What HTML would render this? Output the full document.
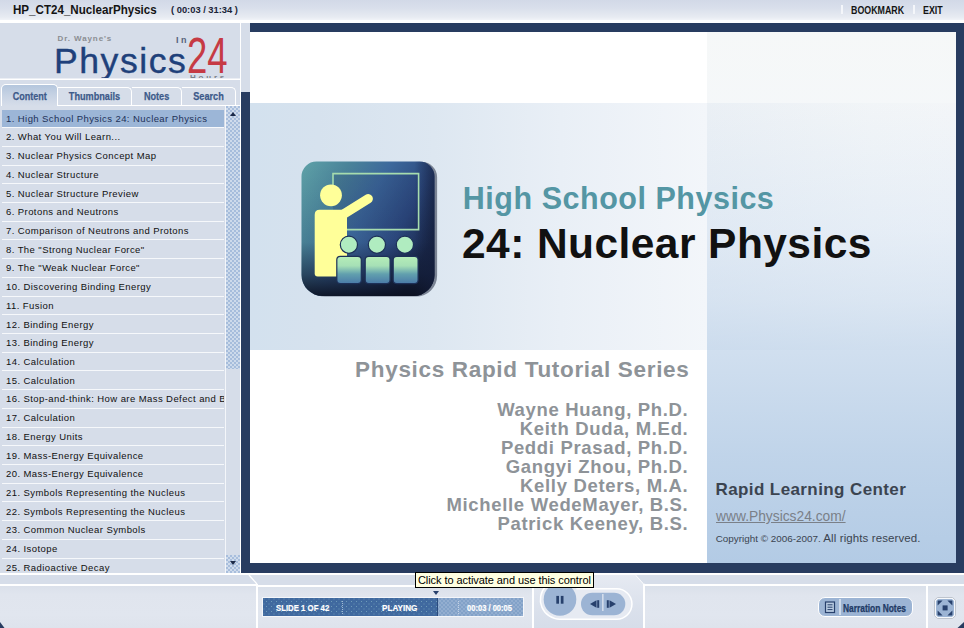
<!DOCTYPE html>
<html lang="en">
<head>
<meta charset="utf-8">
<title>HP_CT24_NuclearPhysics</title>
<style>
html,body{margin:0;padding:0}
body{width:964px;height:628px;position:relative;overflow:hidden;background:#d6dde9;font-family:"Liberation Sans",sans-serif;color:#111}
.abs{position:absolute}
.cx{display:inline-block;transform-origin:0 50%;white-space:pre}
/* header */
#hdr{left:0;top:0;width:964px;height:20px;background:linear-gradient(#d2d9e7 0,#d9dfeb 40%,#e7ebf2 85%,#f1f3f8 100%)}
#hdrline{left:0;top:20px;width:964px;height:3px;background:#fff}
#title{left:12.6px;top:2px;font:bold 13px/15px "Liberation Sans",sans-serif;color:#141414}
#time{left:170.6px;top:4.3px;font:bold 9.5px/12px "Liberation Sans",sans-serif;color:#1a2438}
#bm{left:850.6px;top:4px;font:bold 10.5px/12px "Liberation Sans",sans-serif;color:#141414}
#ex{left:922.6px;top:4px;font:bold 10.5px/12px "Liberation Sans",sans-serif;color:#141414}
.hsep{top:5px;width:2px;height:9px;background:#f4f6fa}
/* left panel */
#vline{left:240px;top:23px;width:1px;height:550px;background:#fff}
#logoline{left:0;top:79px;width:240px;height:1px;background:#fff;box-shadow:0 -1px 0 rgba(255,255,255,.5)}
#logo{left:0;top:23px;width:240px;height:55px;overflow:hidden}
#drw{left:57.5px;top:10.8px;font:bold 8px/10px "Liberation Sans",sans-serif;color:#8b8d92;letter-spacing:.9px}
#phy{left:54px;top:16.6px;font:35.6px/42px "Liberation Sans",sans-serif;color:#20407a;letter-spacing:1.55px;-webkit-text-stroke:.4px #21427a}
#in{left:176px;top:12px;font:bold 9px/10px "Liberation Sans",sans-serif;color:#56627a;letter-spacing:2.4px}
#n24{left:187px;top:6px;font:50px/54px "Liberation Sans",sans-serif;color:#c63a44}
#hrs{left:190px;top:50px;font:bold 8px/10px "Liberation Sans",sans-serif;color:#7b7f88;letter-spacing:2.8px}
/* tabs */
.tab{top:87px;height:18px;box-sizing:border-box;border:1px solid #fff;border-bottom:none;border-left:none;border-radius:0 5px 0 0;text-align:center;font:bold 10.5px/17px "Liberation Sans",sans-serif;color:#3d5a8a;-webkit-text-stroke:.25px #3d5a8a}
#tab1{left:1px;top:84px;width:57px;height:22px;border:1px solid #fff;border-bottom:none;border-radius:5px 5px 0 0;background:linear-gradient(#b4c6dd,#c7d3e4 50%,#d6dde9);line-height:22px}
#tabline{left:57px;top:105px;width:183px;height:1px;background:#fff}
.tab span{transform-origin:50% 50%}
/* list */
#list{left:0;top:106px;width:225px;height:467px;overflow:hidden}
.row{position:absolute;left:2px;width:222px;height:17.4px;margin-top:-106px;border-bottom:1.3px solid #f6f8fb;font:9.5px/18.4px "Liberation Sans",sans-serif;letter-spacing:.42px;color:#101010;white-space:nowrap;overflow:hidden}
.row span{padding-left:4px}
.row.sel{background:#9cb6d7;color:#1c3158}
#lvl{left:225px;top:106px;width:1px;height:467px;background:#f4f6fa}
#sbar{left:226px;top:106px;width:14px;height:467px;background:#d6dde9}
#sup{left:226px;top:106px;width:14px;height:16px;background:radial-gradient(circle at 1px 1px,#8eabd2 .55px,rgba(142,171,210,0) .95px) 0 0/4px 4px,radial-gradient(circle at 3px 3px,#8eabd2 .55px,rgba(142,171,210,0) .95px) 0 0/4px 4px,#d0dcec}
#sth{left:226px;top:122px;width:14px;height:247px;background:radial-gradient(circle at 1px 1px,#8eabd2 .55px,rgba(142,171,210,0) .95px) 0 0/4px 4px,radial-gradient(circle at 3px 3px,#8eabd2 .55px,rgba(142,171,210,0) .95px) 0 0/4px 4px,#cddaeb}
#sdn{left:226px;top:555px;width:14px;height:18px;background:radial-gradient(circle at 1px 1px,#8eabd2 .55px,rgba(142,171,210,0) .95px) 0 0/4px 4px,radial-gradient(circle at 3px 3px,#8eabd2 .55px,rgba(142,171,210,0) .95px) 0 0/4px 4px,#d0dcec}
.tri{width:0;height:0;border-left:3.5px solid transparent;border-right:3.5px solid transparent}
/* slide frame */
#navyT{left:250px;top:23px;width:714px;height:9px;background:#283c60}
#navyR{left:956px;top:23px;width:8px;height:550px;background:#283c60}
#navyB{left:241px;top:563px;width:723px;height:10px;background:#283c60}
#navyL{left:241px;top:92px;width:9px;height:481px;background:#283c60}
#slide{left:250px;top:32px;width:706px;height:531px;background:#fff;overflow:hidden}
#band{left:0;top:71px;width:706px;height:247px;background:linear-gradient(90deg,#d3e1ee 0,#d6e2ee 9.7%,#dde7f1 26%,#e9eff6 44%,#f3f6fa 64.7%,#fbfcfd 88%,#fdfdfe 100%)}
#col{left:457px;top:0;width:249px;height:531px;background:linear-gradient(rgba(180,197,197,.12) 0,rgba(184,202,214,.145) 13.4%,rgba(179,203,229,.30) 37.3%,rgba(179,203,229,.45) 50.5%,rgba(179,203,229,.61) 59.9%,rgba(179,203,229,.83) 80%,rgba(179,203,229,1) 100%)}
#t1{left:212.8px;top:147.5px;font:bold 30.5px/36px "Liberation Sans",sans-serif;color:#5496a4;letter-spacing:.52px;white-space:nowrap}
#t2{left:212px;top:186.5px;font:bold 42.5px/50px "Liberation Sans",sans-serif;color:#111;letter-spacing:.43px;white-space:nowrap}
#t3{right:266.5px;top:324.4px;font:bold 22.5px/28px "Liberation Sans",sans-serif;color:#8e9398;letter-spacing:.68px;white-space:nowrap}
#names{right:267.6px;top:369.3px;text-align:right;font:bold 18.5px/18.95px "Liberation Sans",sans-serif;color:#8e9398;letter-spacing:.67px;white-space:nowrap}
#rlc{left:465.5px;top:448px;font:bold 17px/20px "Liberation Sans",sans-serif;color:#3b4450;letter-spacing:.4px;white-space:nowrap}
#url{left:466px;top:477px;font:13.8px/16px "Liberation Sans",sans-serif;color:#7a8088;text-decoration:underline;white-space:nowrap}
#copy{left:465.7px;top:498.9px;font:9.9px/14px "Liberation Sans",sans-serif;color:#3b4450;white-space:nowrap}
#copy b{font-weight:normal;font-size:11.5px;letter-spacing:.1px}
/* bottom */
#botline{left:0;top:573px;width:964px;height:2px;background:#fff}
.wl{background:#fff}
#bl{left:0;top:585px;width:256px;height:43px;background:linear-gradient(#dae0ea 0,#e0e5ee 22%,#e1e6ef 70%,#dee3ec 100%)}
#bc{left:258px;top:586px;width:274px;height:42px;background:linear-gradient(#dae0ea 0,#e0e5ee 22%,#e1e6ef 70%,#dee3ec 100%)}
#bt{left:533px;top:575px;width:110px;height:53px;background:linear-gradient(#e6eaf2,#dbe1ec 60%,#d6dde9)}
#br{left:645px;top:586px;width:281px;height:42px;background:linear-gradient(#dae0ea 0,#e0e5ee 22%,#e1e6ef 70%,#dee3ec 100%)}
#bf{left:928px;top:586px;width:36px;height:42px;background:linear-gradient(#dae0ea 0,#e0e5ee 22%,#e1e6ef 70%,#dee3ec 100%)}
#pbar{left:262px;top:597px;width:262px;height:20px;box-sizing:border-box;border:1px solid #f4f6fa;background:radial-gradient(circle at 1px 1px,rgba(90,130,180,.6) .5px,rgba(90,130,180,0) .9px) 0 0/4px 4px,radial-gradient(circle at 3px 3px,rgba(90,130,180,.6) .5px,rgba(90,130,180,0) .9px) 0 0/4px 4px,#93aed0}
#pdone{left:0;top:0;width:174px;height:18px;background:radial-gradient(circle at 1px 1px,rgba(140,190,200,.6) .4px,rgba(140,190,200,0) .8px) 0 0/5px 5px,radial-gradient(circle at 3.5px 3.5px,rgba(140,190,200,.6) .4px,rgba(140,190,200,0) .8px) 0 0/5px 5px,#40699f;border-right:1px solid #2b4c7e}
.pt{top:.8px;font:bold 9px/18px "Liberation Sans",sans-serif;color:#fff;-webkit-text-stroke:.2px #fff}
#tip{left:415px;top:572px;width:179px;height:16px;box-sizing:border-box;border:1px solid #000;background:#ffffe1;font:11px/14.4px "Liberation Sans",sans-serif;color:#000;letter-spacing:-.07px;padding-left:2px;white-space:nowrap}
#nn{left:818px;top:597px;width:95px;height:20px;box-sizing:border-box;border:1px solid #fff;border-radius:7px;background:#9cb4d4}
#nn .t{left:24px;top:1.6px;font:bold 10px/18px "Liberation Sans",sans-serif;color:#213a66;-webkit-text-stroke:.25px #213a66}
#fs{left:934px;top:597px;width:22px;height:22px}
</style>
</head>
<body>
<!-- header -->
<div class="abs" id="hdr"></div>
<div class="abs" id="hdrline"></div>
<div class="abs" id="title"><span class="cx" style="transform:scaleX(.892)">HP_CT24_NuclearPhysics</span></div>
<div class="abs" id="time"><span class="cx" style="transform:scaleX(.983)">( 00:03 / 31:34 )</span></div>
<div class="abs hsep" style="left:841px"></div>
<div class="abs" id="bm"><span class="cx" style="transform:scaleX(.842)">BOOKMARK</span></div>
<div class="abs hsep" style="left:913px"></div>
<div class="abs" id="ex"><span class="cx" style="transform:scaleX(.845)">EXIT</span></div>

<!-- left panel -->
<div class="abs" id="vline"></div>
<div class="abs" id="logo">
  <div class="abs" id="drw">Dr. Wayne's</div>
  <div class="abs" id="phy">Physics</div>
  <div class="abs" id="in">In</div>
  <div class="abs" id="n24"><span class="cx" style="transform:scaleX(.73)">24</span></div>
  <div class="abs" id="hrs">Hours</div>
</div>
<div class="abs" id="logoline"></div>

<div class="abs tab" id="tab1"><span class="cx" style="transform:scaleX(.86)">Content</span></div>
<div class="abs tab" style="left:58px;width:74px"><span class="cx" style="transform:scaleX(.87)">Thumbnails</span></div>
<div class="abs tab" style="left:132px;width:50px"><span class="cx" style="transform:scaleX(.87)">Notes</span></div>
<div class="abs tab" style="left:182px;width:54px"><span class="cx" style="transform:scaleX(.87)">Search</span></div>
<div class="abs" id="tabline"></div>

<div class="abs" id="list">
<div class="row sel" style="top:109.70px"><span>1. High School Physics 24: Nuclear Physics</span></div>
<div class="row" style="top:128.42px"><span>2. What You Will Learn...</span></div>
<div class="row" style="top:147.13px"><span>3. Nuclear Physics Concept Map</span></div>
<div class="row" style="top:165.85px"><span>4. Nuclear Structure</span></div>
<div class="row" style="top:184.57px"><span>5. Nuclear Structure Preview</span></div>
<div class="row" style="top:203.28px"><span>6. Protons and Neutrons</span></div>
<div class="row" style="top:222.00px"><span>7. Comparison of Neutrons and Protons</span></div>
<div class="row" style="top:240.72px"><span>8. The &quot;Strong Nuclear Force&quot;</span></div>
<div class="row" style="top:259.44px"><span>9. The &quot;Weak Nuclear Force&quot;</span></div>
<div class="row" style="top:278.15px"><span>10. Discovering Binding Energy</span></div>
<div class="row" style="top:296.87px"><span>11. Fusion</span></div>
<div class="row" style="top:315.59px"><span>12. Binding Energy</span></div>
<div class="row" style="top:334.30px"><span>13. Binding Energy</span></div>
<div class="row" style="top:353.02px"><span>14. Calculation</span></div>
<div class="row" style="top:371.74px"><span>15. Calculation</span></div>
<div class="row" style="top:390.45px"><span>16. Stop-and-think: How are Mass Defect and B</span></div>
<div class="row" style="top:409.17px"><span>17. Calculation</span></div>
<div class="row" style="top:427.89px"><span>18. Energy Units</span></div>
<div class="row" style="top:446.61px"><span>19. Mass-Energy Equivalence</span></div>
<div class="row" style="top:465.32px"><span>20. Mass-Energy Equivalence</span></div>
<div class="row" style="top:484.04px"><span>21. Symbols Representing the Nucleus</span></div>
<div class="row" style="top:502.76px"><span>22. Symbols Representing the Nucleus</span></div>
<div class="row" style="top:521.47px"><span>23. Common Nuclear Symbols</span></div>
<div class="row" style="top:540.19px"><span>24. Isotope</span></div>
<div class="row" style="top:558.91px"><span>25. Radioactive Decay</span></div>
</div>
<div class="abs" id="lvl"></div>
<div class="abs" id="sbar"></div>
<div class="abs" id="sth"></div>
<div class="abs" id="sup"><div class="abs tri" style="left:3.5px;top:6px;border-bottom:4px solid #1c2a48"></div></div>
<div class="abs" id="sdn"><div class="abs tri" style="left:3.5px;top:6px;border-top:4px solid #1c2a48"></div></div>

<!-- slide frame -->
<div class="abs" id="navyT"></div>
<div class="abs" id="navyR"></div>
<div class="abs" id="navyB"></div>
<div class="abs" id="navyL"></div>
<div class="abs" id="slide">
  <div class="abs" id="band"></div>
  <div class="abs" id="col"></div>
  <svg class="abs" style="left:48px;top:126px" width="144" height="142" viewBox="0 0 144 142">
    <defs>
      <linearGradient id="ig" x1="0" y1="0" x2="1" y2="0.55">
        <stop offset="0" stop-color="#5fa2a8"/>
        <stop offset="0.28" stop-color="#4a8399"/>
        <stop offset="0.52" stop-color="#3d699c"/>
        <stop offset="0.78" stop-color="#2d4a80"/>
        <stop offset="1" stop-color="#1b2a4e"/>
      </linearGradient>
      <linearGradient id="iv" x1="0" y1="0" x2="0" y2="1">
        <stop offset="0" stop-color="#0c1224" stop-opacity="0"/>
        <stop offset="0.6" stop-color="#0c1224" stop-opacity="0.05"/>
        <stop offset="0.84" stop-color="#0c1224" stop-opacity="0.5"/>
        <stop offset="1" stop-color="#0a0e1c" stop-opacity="0.9"/>
      </linearGradient>
      <linearGradient id="ih" x1="0" y1="0" x2="1" y2="0">
        <stop offset="0.85" stop-color="#141e3c" stop-opacity="0"/>
        <stop offset="1" stop-color="#141e3c" stop-opacity="0.65"/>
      </linearGradient>
      <linearGradient id="sg" x1="0" y1="0" x2="0" y2="1">
        <stop offset="0" stop-color="#b6eeb8"/>
        <stop offset="0.35" stop-color="#a6e0b6"/>
        <stop offset="0.65" stop-color="#62a0ae"/>
        <stop offset="1" stop-color="#4a7aa8"/>
      </linearGradient>
    </defs>
    <path transform="translate(2.6 .6)" d="M18.5 3.5 H121.5 A15 15 0 0 1 136.5 18.5 V117 A21 21 0 0 1 115.5 138 H24.5 A21 21 0 0 1 3.5 117 V18.5 A15 15 0 0 1 18.5 3.5 Z" fill="#1a2238" opacity=".5"/>
    <path d="M18.5 3.5 H121.5 A15 15 0 0 1 136.5 18.5 V117 A21 21 0 0 1 115.5 138 H24.5 A21 21 0 0 1 3.5 117 V18.5 A15 15 0 0 1 18.5 3.5 Z" fill="url(#ig)"/>
    <path d="M18.5 3.5 H121.5 A15 15 0 0 1 136.5 18.5 V117 A21 21 0 0 1 115.5 138 H24.5 A21 21 0 0 1 3.5 117 V18.5 A15 15 0 0 1 18.5 3.5 Z" fill="url(#iv)"/>
    <path d="M18.5 3.5 H121.5 A15 15 0 0 1 136.5 18.5 V117 A21 21 0 0 1 115.5 138 H24.5 A21 21 0 0 1 3.5 117 V18.5 A15 15 0 0 1 18.5 3.5 Z" fill="url(#ih)"/>
    <rect x="35" y="15.6" width="85.6" height="56" fill="#16285a" fill-opacity=".16"/>
    <path d="M35 32 V15.6 H120.6 V71.6 H47" fill="none" stroke="#a6dcae" stroke-width="1.6"/>
    <!-- teacher -->
    <circle cx="33" cy="37.3" r="10.9" fill="#ffff99"/>
    <path d="M21.7 51.7 H46 Q49 52.5 49 57 V118.6 H19.7 Q16.7 118.6 16.7 115.6 V56.7 Q16.7 51.7 21.7 51.7 Z" fill="#ffff99"/>
    <path d="M45 56.5 L70.2 40.8" stroke="#ffff99" stroke-width="9.4" stroke-linecap="round" fill="none"/>
    <!-- students -->
    <g stroke="#1d3058" stroke-width="1.2">
    <circle cx="50.9" cy="86.7" r="8.6" fill="#b0ecc0"/>
    <circle cx="78.9" cy="86.7" r="8.6" fill="#b0ecc0"/>
    <circle cx="106.9" cy="86.7" r="8.6" fill="#b0ecc0"/>
    <rect x="38.8" y="98.3" width="24.5" height="27.3" rx="3.5" fill="url(#sg)"/>
    <rect x="67.2" y="98.3" width="24.9" height="27.3" rx="3.5" fill="url(#sg)"/>
    <rect x="95.2" y="98.3" width="24.9" height="27.3" rx="3.5" fill="url(#sg)"/>
    </g>
  </svg>
  <div class="abs" id="t1">High School Physics</div>
  <div class="abs" id="t2">24: Nuclear Physics</div>
  <div class="abs" id="t3">Physics Rapid Tutorial Series</div>
  <div class="abs" id="names">Wayne Huang, Ph.D.<br>Keith Duda, M.Ed.<br>Peddi Prasad, Ph.D.<br>Gangyi Zhou, Ph.D.<br>Kelly Deters, M.A.<br>Michelle WedeMayer, B.S.<br>Patrick Keeney, B.S.</div>
  <div class="abs" id="rlc">Rapid Learning Center</div>
  <div class="abs" id="url">www.Physics24.com/</div>
  <div class="abs" id="copy">Copyright © 2006-2007.<b> All rights reserved.</b></div>
</div>

<!-- bottom -->
<div class="abs" id="botline"></div>
<div class="abs" id="bl"></div>
<div class="abs" id="bc"></div>
<div class="abs" id="bt"></div>
<div class="abs" id="br"></div>
<div class="abs" id="bf"></div>
<div class="abs wl" style="left:0;top:584px;width:257px;height:1.5px"></div>
<div class="abs wl" style="left:256px;top:584px;width:1.5px;height:44px"></div>
<div class="abs wl" style="left:257px;top:585px;width:276px;height:1.5px"></div>
<div class="abs wl" style="left:532px;top:575px;width:1.5px;height:53px"></div>
<div class="abs wl" style="left:643px;top:584px;width:1.5px;height:44px"></div>
<div class="abs wl" style="left:643px;top:584px;width:321px;height:1.5px"></div>
<div class="abs wl" style="left:926px;top:584px;width:1.5px;height:44px"></div>
<svg class="abs" style="left:0;top:573px" width="964" height="55" viewBox="0 0 964 55">
  <path d="M249 2 L257 11" stroke="#fff" stroke-width="1.3" fill="none"/>
  <path d="M636 2 L644 11" stroke="#fff" stroke-width="1.3" fill="none"/>
  <path d="M636 2 L644 11 L644 2 Z" fill="#d6dde9"/>
  <path d="M964 49 L957.5 55 L964 55 Z" fill="#283c60"/>
  <path d="M0 49 L4.5 55 L0 55 Z" fill="#283c60"/>
</svg>

<div class="abs" id="pbar">
  <div class="abs" id="pdone"></div>
  <div class="abs" style="left:79px;top:3px;width:0;height:13px;border-left:1px dotted #9fb8d6"></div>
  <div class="abs" style="left:195px;top:3px;width:0;height:13px;border-left:1px dotted #c3d2e5"></div>
  <div class="abs pt" style="left:13px"><span class="cx" style="transform:scaleX(.865)">SLIDE 1 OF 42</span></div>
  <div class="abs pt" style="left:119px"><span class="cx" style="transform:scaleX(.905)">PLAYING</span></div>
  <div class="abs pt" style="left:204px"><span class="cx" style="transform:scaleX(.84)">00:03 / 00:05</span></div>
</div>
<div class="abs tri" style="left:432.5px;top:590.5px;border-top:4px solid #27406c"></div>

<!-- buttons -->
<svg class="abs" style="left:533px;top:575px" width="110" height="53" viewBox="0 0 110 53">
  <path d="M13 11 A19.5 19.5 0 0 0 27 44.2 H83.75 A15.2 15.2 0 0 0 83.75 13.8 H43.4" fill="#e6eaf2" stroke="#fff" stroke-width="1.5"/>
  <circle cx="27" cy="24.4" r="16.3" fill="#9cb4d4"/>
  <rect x="23.3" y="20.9" width="2.7" height="7.8" fill="#27406c"/>
  <rect x="27.8" y="20.9" width="2.7" height="7.8" fill="#27406c"/>
  <rect x="48" y="17.8" width="44.3" height="22.4" rx="11.2" fill="#9cb4d4"/>
  <rect x="69.2" y="19" width="1.3" height="17" fill="#dfe6f0"/>
  <path d="M57 29 L63.5 25.2 V32.8 Z" fill="#27406c"/><rect x="64.2" y="25.2" width="2" height="7.6" fill="#27406c"/>
  <path d="M83 29 L76.5 25.2 V32.8 Z" fill="#27406c"/><rect x="73.8" y="25.2" width="2" height="7.6" fill="#27406c"/>
</svg>
<div class="abs" id="tip">Click to activate and use this control</div>

<div class="abs" id="nn">
  <svg class="abs" style="left:5px;top:3px" width="14" height="13" viewBox="0 0 14 13">
    <rect x="1.5" y="1" width="9" height="10.5" fill="#b9cbe2" stroke="#27406c" stroke-width="1.2"/>
    <path d="M3.5 3.8H8.5M3.5 6.2H8.5M3.5 8.6H8.5" stroke="#27406c" stroke-width="1"/>
  </svg>
  <div class="abs" style="left:20px;top:1px;width:1.5px;height:16px;background:#cfdbeb"></div>
  <div class="abs t"><span class="cx" style="transform:scaleX(.84)">Narration Notes</span></div>
</div>
<svg class="abs" id="fs" viewBox="0 0 22 22">
  <path d="M3.4 .5 H18.6 L21.5 3.4 V18.6 L18.6 21.5 H3.4 L.5 18.6 V3.4 Z" fill="#f6f8fb" stroke="#b9bec8" stroke-width=".9"/>
  <path d="M4 2 H18 L20 4 V18 L18 20 H4 L2 18 V4 Z" fill="#9cb4d4"/>
  <rect x="8.6" y="8.4" width="5" height="5" fill="#27406c"/>
  <path d="M3.6 3.6 H8.6 L3.6 8.6 Z M18.4 3.6 V8.6 L13.4 3.6 Z M3.6 18.4 V13.4 L8.6 18.4 Z M18.4 18.4 H13.4 L18.4 13.4 Z" fill="#27406c"/>
</svg>
</body>
</html>
